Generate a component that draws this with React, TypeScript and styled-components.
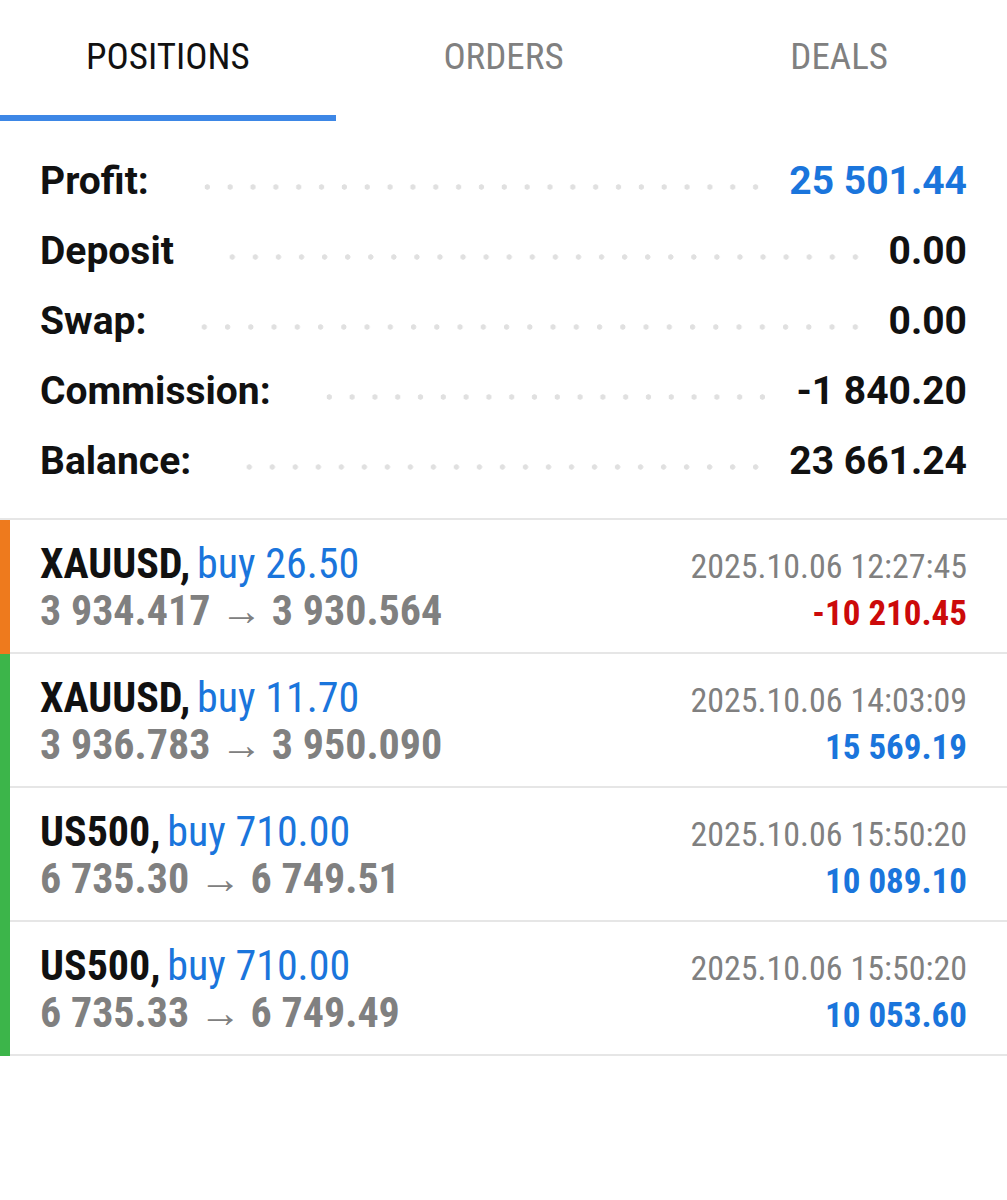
import React from "react";
import styled, { createGlobalStyle } from "styled-components";

const GlobalStyle = createGlobalStyle`
  html, body { margin: 0; padding: 0; background: #ffffff; }
  body { font-family: Roboto, "Noto Sans", sans-serif; color: #111; }
`;

const COND = `"Roboto Condensed", Roboto, "Noto Sans", sans-serif`;

const Screen = styled.div`
  width: 1007px;
  min-height: 1200px;
  background: #fff;
`;

const TabBar = styled.div`
  display: grid;
  grid-template-columns: repeat(3, 1fr);
  height: 122px;
`;

const Tab = styled.div<{ $active?: boolean }>`
  display: flex;
  flex-direction: column;
  align-items: center;
  justify-content: space-between;
  padding-top: 39px;
  padding-bottom: 1px;
  box-sizing: border-box;
  font-family: ${COND};
  font-size: 37px;
  line-height: 36px;
  color: ${(p) => (p.$active ? "#111" : "#808080")};
`;

const TabIndicator = styled.div<{ $active?: boolean }>`
  align-self: stretch;
  height: 6px;
  background: ${(p) => (p.$active ? "#3d87e6" : "transparent")};
`;

const Summary = styled.div`
  padding: 24px 40px 22px 40px;
  display: flex;
  flex-direction: column;
`;

const SummaryRow = styled.div`
  display: flex;
  align-items: flex-start;
  height: 70px;
  line-height: 70px;
  font-size: 39px;
  font-weight: 700;
`;

const Label = styled.span`
  color: #111;
`;

const Leader = styled.span`
  flex: 1;
  height: 6px;
  margin: 38px 22px 0 47px;
  background-image: radial-gradient(circle, #e0e0e0 2.4px, transparent 3px);
  background-size: 22.6px 6px;
  background-repeat: space no-repeat;
  background-position: left center;
`;

const Value = styled.span<{ $blue?: boolean }>`
  color: ${(p) => (p.$blue ? "#1a75dc" : "#111")};
`;

const PositionList = styled.div`
  border-top: 2px solid #e6e6e6;
`;

const PositionRow = styled.div`
  display: flex;
`;

const SideBar = styled.div<{ $color: string }>`
  width: 10px;
  flex: none;
  background: ${(p) => p.$color};
`;

const RowBody = styled.div`
  flex: 1;
  padding: 20px 40px 18px 30px;
  border-bottom: 2px solid #e6e6e6;
  font-family: ${COND};
`;

const Line = styled.div`
  display: flex;
  justify-content: space-between;
  align-items: baseline;
  height: 47px;
  line-height: 47px;
`;

const Symbol = styled.span`
  font-size: 42px;
  font-weight: 700;
  color: #111;
`;

const Volume = styled.span`
  margin-left: 3px;
  font-size: 42px;
  font-weight: 400;
  color: #1a75dc;
`;

const Prices = styled.span`
  font-size: 42px;
  font-weight: 700;
  color: #808080;
`;

const Time = styled.span`
  font-size: 34px;
  color: #808080;
`;

const Pnl = styled.span<{ $neg?: boolean }>`
  font-size: 35px;
  font-weight: 700;
  color: ${(p) => (p.$neg ? "#cc0a0a" : "#1a75dc")};
`;

const summary = [
  { label: "Profit:", value: "25 501.44", blue: true },
  { label: "Deposit", value: "0.00" },
  { label: "Swap:", value: "0.00" },
  { label: "Commission:", value: "-1 840.20" },
  { label: "Balance:", value: "23 661.24" },
];

const positions = [
  { sym: "XAUUSD", vol: "buy 26.50", from: "3 934.417", to: "3 930.564", time: "2025.10.06 12:27:45", pnl: "-10 210.45", neg: true, color: "#ee7a1d" },
  { sym: "XAUUSD", vol: "buy 11.70", from: "3 936.783", to: "3 950.090", time: "2025.10.06 14:03:09", pnl: "15 569.19", neg: false, color: "#3cb54a" },
  { sym: "US500", vol: "buy 710.00", from: "6 735.30", to: "6 749.51", time: "2025.10.06 15:50:20", pnl: "10 089.10", neg: false, color: "#3cb54a" },
  { sym: "US500", vol: "buy 710.00", from: "6 735.33", to: "6 749.49", time: "2025.10.06 15:50:20", pnl: "10 053.60", neg: false, color: "#3cb54a" },
];

const tabs = ["POSITIONS", "ORDERS", "DEALS"];

export default function App() {
  return (
    <Screen>
      <GlobalStyle />
      <TabBar>
        {tabs.map((t, i) => (
          <Tab key={t} $active={i === 0}>
            <span>{t}</span>
            <TabIndicator $active={i === 0} />
          </Tab>
        ))}
      </TabBar>
      <Summary>
        {summary.map((s) => (
          <SummaryRow key={s.label}>
            <Label>{s.label}</Label>
            <Leader />
            <Value $blue={s.blue}>{s.value}</Value>
          </SummaryRow>
        ))}
      </Summary>
      <PositionList>
        {positions.map((p, i) => (
          <PositionRow key={i}>
            <SideBar $color={p.color} />
            <RowBody>
              <Line>
                <span>
                  <Symbol>{p.sym},</Symbol> <Volume>{p.vol}</Volume>
                </span>
                <Time>{p.time}</Time>
              </Line>
              <Line>
                <Prices>
                  {p.from} → {p.to}
                </Prices>
                <Pnl $neg={p.neg}>{p.pnl}</Pnl>
              </Line>
            </RowBody>
          </PositionRow>
        ))}
      </PositionList>
    </Screen>
  );
}
